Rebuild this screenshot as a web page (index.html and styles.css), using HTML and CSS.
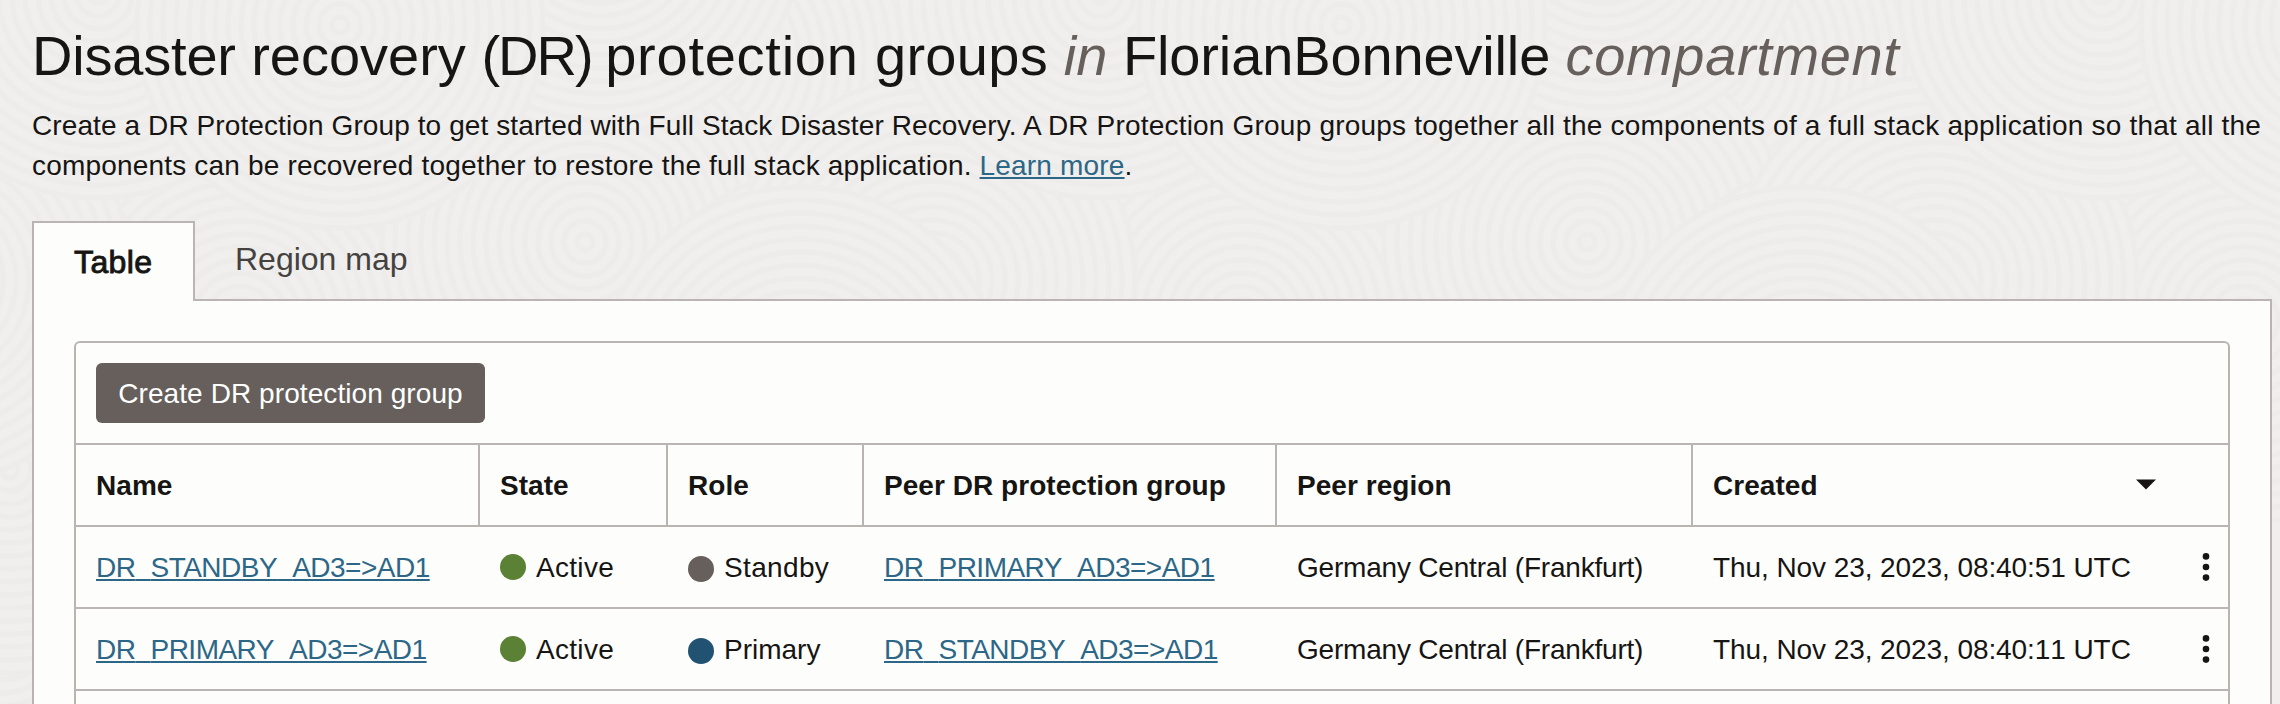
FILE: index.html
```html
<!DOCTYPE html>
<html lang="en"><head><meta charset="utf-8"><title>DR protection groups</title><link rel="stylesheet" href="styles.css"></head>
<body>
<svg class="texture" width="2280" height="704" aria-hidden="true">
<defs>
<g id="ripple"><circle r="206" fill="#f0efed"/>
<g fill="none" stroke="#edecea" stroke-width="5"><circle r="8"/><circle r="21"/><circle r="34"/><circle r="47"/><circle r="60"/><circle r="73"/><circle r="86"/><circle r="99"/><circle r="112"/><circle r="125"/><circle r="138"/><circle r="151"/><circle r="164"/><circle r="177"/><circle r="190"/><circle r="203"/></g></g>
<pattern id="waves" width="1002" height="704" patternUnits="userSpaceOnUse">
<use href="#ripple" x="700" y="60"/><use href="#ripple" x="500" y="120"/>
<use href="#ripple" x="0" y="620"/><use href="#ripple" x="1002" y="620"/>
<use href="#ripple" x="240" y="320"/><use href="#ripple" x="10" y="470"/><use href="#ripple" x="1012" y="470"/>
<use href="#ripple" x="585" y="242"/>
<use href="#ripple" x="830" y="370"/><use href="#ripple" x="-70" y="280"/><use href="#ripple" x="932" y="280"/>
<use href="#ripple" x="800" y="390"/>
<use href="#ripple" x="98" y="-5"/><use href="#ripple" x="1100" y="-5"/>
<use href="#ripple" x="600" y="-70"/><use href="#ripple" x="340" y="25"/>
</pattern>
</defs>
<rect width="2280" height="704" fill="url(#waves)"/>
</svg>
<main class="page">
<h1 class="title"><span class="w1">Disaster </span>recovery <span class="w2">(DR) </span><span class="w3">protection </span><span class="w4">groups </span><em>in</em> <span class="w5">FlorianBonneville </span><em class="w6">compartment</em></h1>
<p class="intro"><span class="line1a">Create a DR Protection Group to get started with Full Stack Disaster Recovery. A DR </span><span class="line1b">Protection Group groups together all the components of a full stack application so that all the</span><br><span class="line2">components can be recovered together to restore the full stack application. <a href="#">Learn more</a>.</span></p>
<nav class="tabs"><a class="tab active">Table</a><a class="tab">Region map</a></nav>
<section class="panel">
<div class="card">
<div class="toolbar"><button class="create">Create DR protection group</button></div>
<div class="row head">
<div class="cell">Name</div><div class="cell">State</div><div class="cell">Role</div><div class="cell">Peer DR protection group</div><div class="cell">Peer region</div><div class="cell created">Created<svg class="caret" width="20" height="11" viewBox="0 0 20 11"><path d="M0 0.5H20L10 10.5Z" fill="#161513"/></svg></div>
</div>
<div class="row">
<div class="cell name"><a href="#">DR<span class="us">_</span>STANDBY<span class="us">_</span>AD3=&gt;AD1</a></div><div class="cell state"><i class="dot green"></i>Active</div><div class="cell role wide"><i class="dot gray"></i>Standby</div><div class="cell name"><a href="#">DR<span class="us">_</span>PRIMARY<span class="us">_</span>AD3=&gt;AD1</a></div><div class="cell region">Germany Central (Frankfurt)</div><div class="cell date">Thu, Nov 23, 2023, 08:40:51 UTC<svg class="kebab" width="8" height="32" viewBox="0 0 8 32"><g fill="#161513"><circle cx="4" cy="5.4" r="3.3"/><circle cx="4" cy="16" r="3.3"/><circle cx="4" cy="26.6" r="3.3"/></g></svg></div>
</div>
<div class="row">
<div class="cell name"><a href="#">DR<span class="us">_</span>PRIMARY<span class="us">_</span>AD3=&gt;AD1</a></div><div class="cell state"><i class="dot green"></i>Active</div><div class="cell role"><i class="dot blue"></i>Primary</div><div class="cell name"><a href="#">DR<span class="us">_</span>STANDBY<span class="us">_</span>AD3=&gt;AD1</a></div><div class="cell region">Germany Central (Frankfurt)</div><div class="cell date">Thu, Nov 23, 2023, 08:40:11 UTC<svg class="kebab" width="8" height="32" viewBox="0 0 8 32"><g fill="#161513"><circle cx="4" cy="5.4" r="3.3"/><circle cx="4" cy="16" r="3.3"/><circle cx="4" cy="26.6" r="3.3"/></g></svg></div>
</div>
</div>
</section>
</main>
</body></html>
```
FILE: styles.css
```css
* { box-sizing: border-box; }
body { margin: 0; height: 704px; overflow: hidden; background: #f0efed; color: #161513; font: 28px/40px "Liberation Sans", Arial, sans-serif; }
.texture { position: absolute; inset: 0; z-index: -1; }
.page { height: 704px; padding: 20px 8px 0 32px; display: flex; flex-direction: column; }
.title { margin: 0; font-weight: 400; font-size: 56px; line-height: 72px; white-space: nowrap; }
.title em { color: #665f5b; }
.w1 { letter-spacing: -0.2px; }
.w2 { letter-spacing: -2px; }
.w3 { letter-spacing: 0.75px; }
.w4 { letter-spacing: 0.3px; }
.w5 { letter-spacing: -0.14px; }
.w6 { letter-spacing: 0.65px; }
.intro { margin: 14px 0 35px; white-space: nowrap; }
.line1a { letter-spacing: 0.1px; }
.line1b { letter-spacing: 0.2px; }
.line2 { letter-spacing: 0.18px; }
a { color: #2c6788; text-decoration: underline; text-decoration-thickness: 2px; text-underline-offset: 2px; text-decoration-skip-ink: none; }
.us { color: transparent; }
.tabs { display: flex; height: 80px; position: relative; z-index: 1; }
.tab { text-decoration: none; color: #444240; font-size: 32px; padding: 18px 40px; white-space: nowrap; }
.tab.active { width: 163px; height: 80px; background: #fdfdfb; border: 2px solid #bab5b0; border-bottom: 0; color: #161513; -webkit-text-stroke: 0.9px #161513; letter-spacing: 0.4px; padding-top: 19px; }
.panel { flex: 1; min-height: 0; overflow: hidden; margin-top: -2px; border: 2px solid #bab5b0; border-bottom: 0; background: #fdfdfb; padding: 40px 40px 0; }
.card { height: 363px; border: 2px solid #bab5b0; border-bottom: 0; border-radius: 6px 6px 0 0; }
.toolbar { height: 102px; padding: 20px; border-bottom: 2px solid #bab5b0; }
.create { display: block; width: 389px; height: 60px; padding: 2px 0 0; border: 0; border-radius: 6px; background: #665f5b; color: #fff; font: inherit; letter-spacing: 0.08px; white-space: nowrap; }
.row { height: 82px; display: grid; grid-template-columns: 404px 188px 196px 413px 416px 1fr; border-bottom: 2px solid #bab5b0; }
.cell { display: flex; align-items: center; padding: 2px 0 0 20px; white-space: nowrap; }
.head .cell { font-weight: 700; letter-spacing: 0.05px; border-right: 2px solid #bab5b0; }
.head .cell:last-child { border-right: 0; padding-right: 72px; justify-content: space-between; }
.caret { margin-top: -4px; }
.name { letter-spacing: -0.51px; }
.state { letter-spacing: 0.3px; }
.wide { letter-spacing: 0.35px; }
.region { letter-spacing: -0.2px; }
.date { justify-content: space-between; padding-right: 18px; letter-spacing: -0.08px; font-kerning: none; }
.kebab { margin-top: -2px; }
.dot { width: 26px; height: 26px; border-radius: 50%; margin: -2px 10px 0 0; }
.green { background: #5b8134; }
.gray { background: #665f5b; }
.blue { background: #215272; }
.role .dot { margin-top: 2px; }
```
